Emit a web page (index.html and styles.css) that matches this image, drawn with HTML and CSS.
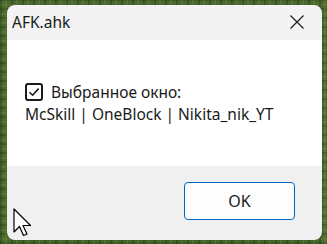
FILE: index.html
```html
<!DOCTYPE html>
<html>
<head>
<meta charset="utf-8">
<link rel="stylesheet" href="styles.css">
</head>
<body>
<div class="desktop">
  <div class="window">
    <div class="titlebar">
      <span class="title">AFK.ahk</span>
      <svg class="close" width="16" height="16" viewBox="0 0 16 16"><path d="M1.5 1.5 L14.5 14.5 M14.5 1.5 L1.5 14.5" stroke="#1a1a1a" stroke-width="1.2" fill="none"/></svg>
    </div>
    <div class="content">
      <label class="check">
        <span class="box"><svg width="14" height="14" viewBox="0 0 14 14"><path d="M2.5 7.2 L5.6 10.2 L11.6 3.6" stroke="#1a1a1a" stroke-width="1.6" fill="none"/></svg></span>
        <span class="label">Выбранное окно:</span>
      </label>
      <div class="value">McSkill | OneBlock | Nikita_nik_YT</div>
    </div>
    <div class="footer">
      <button class="ok">OK</button>
    </div>
  </div>
  <svg class="cursor" width="20" height="30" viewBox="0 0 20 30"><path d="M1 1 L1 24 L6.5 18.5 L10.5 27.5 L14 26 L10 17.5 L17.5 17.5 Z" fill="#fff" stroke="#000" stroke-width="1.2" stroke-linejoin="round"/></svg>
</div>
</body>
</html>
```
FILE: styles.css
```css
html, body {
  margin: 0;
  padding: 0;
}
body {
  width: 327px;
  height: 244px;
  overflow: hidden;
  font-family: "Segoe UI", "Noto Sans", "Open Sans", sans-serif;
}
.desktop {
  position: relative;
  width: 327px;
  height: 244px;
  background-color: #4b6a2f;
  background-image:
    repeating-linear-gradient(90deg, rgba(30,50,15,0.35) 0 2px, transparent 2px 5px, rgba(110,140,60,0.3) 5px 7px, transparent 7px 11px),
    repeating-linear-gradient(0deg, rgba(30,50,15,0.3) 0 2px, transparent 2px 4px, rgba(120,150,70,0.25) 4px 6px, transparent 6px 9px);
  padding-top: 5px;
  box-sizing: border-box;
}
.window {
  margin-left: 7px;
  width: 315px;
  height: 235px;
  border-radius: 8px;
  overflow: hidden;
  display: flex;
  flex-direction: column;
  box-shadow: 0 0 2px rgba(0,0,0,0.4);
}
.titlebar {
  height: 35px;
  background: #f3f3f3;
  display: flex;
  align-items: center;
  justify-content: space-between;
  padding: 0 17px 0 5px;
  box-sizing: border-box;
}
.title {
  font-size: 15.5px;
  color: #1a1a1a;
  margin-top: -2px;
}
.close {
  margin-top: -1px;
}
.content {
  height: 126px;
  background: #ffffff;
  padding: 42px 0 0 18px;
  box-sizing: border-box;
  font-size: 15.5px;
  color: #1a1a1a;
}
.check {
  display: flex;
  align-items: center;
  height: 19px;
}
.box {
  width: 18px;
  height: 18px;
  box-sizing: border-box;
  border: 2px solid #1b1b1b;
  border-radius: 3px;
  display: flex;
  align-items: center;
  justify-content: center;
  margin-right: 8px;
}
.value {
  margin-top: 3px;
  line-height: 21px;
}
.footer {
  flex: 1;
  background: #f0f0f0;
  padding: 16px 0 0 177px;
  box-sizing: border-box;
}
.ok {
  width: 111px;
  height: 38px;
  background: #fdfdfd;
  border: 1.5px solid #0067c0;
  border-radius: 4px;
  font-family: inherit;
  font-size: 16px;
  color: #1a1a1a;
  padding: 0;
}
.cursor {
  position: absolute;
  left: 13px;
  top: 208px;
}
```
